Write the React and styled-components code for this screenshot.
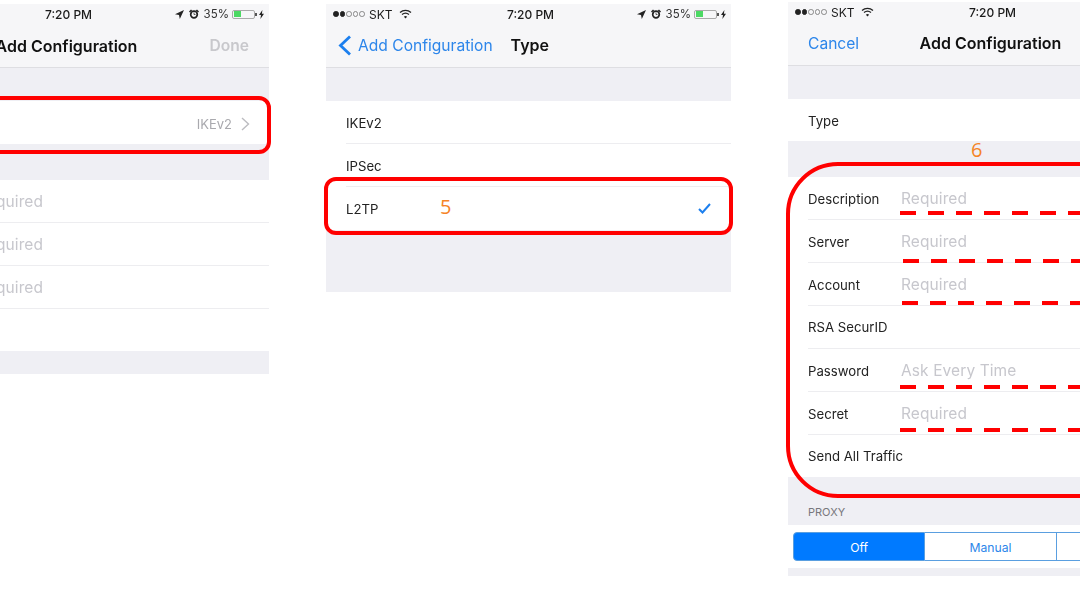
import React from "react";
import styled, { createGlobalStyle, css } from "styled-components";

const Global = createGlobalStyle`
  html, body { margin: 0; padding: 0; background: #fff; }
  body { font-family: Inter, "Liberation Sans", sans-serif; overflow: hidden; }
`;

const soft = css`
  filter: blur(0.3px);
`;

const Canvas = styled.main`
  width: 1216px;
  height: 592px;
  overflow: hidden;
  display: flex;
  align-items: flex-start;
  gap: 57px;
  margin-left: -136px;
`;
const Phone = styled.section`
  position: relative;
  flex: 0 0 405px;
  width: 405px;
  margin-top: ${(p) => p.$top}px;
  background: #efeff4;
`;
const StatusBar = styled.div`
  height: 20px;
  display: grid;
  grid-template-columns: 1fr auto 1fr;
  align-items: center;
  padding: 0 5px 0 7px;
  background: #f6f6f8;
  color: #1a1a1a;
  font-size: 11.5px;
  ${soft}
`;
const StatusLeft = styled.div`
  display: flex;
  align-items: center;
  gap: 4px;
`;
const StatusRight = styled.div`
  display: flex;
  align-items: center;
  justify-content: flex-end;
  gap: 5px;
`;
const Dots = styled.div`
  display: flex;
  gap: 1px;
`;
const Dot = styled.span`
  width: 5.6px;
  height: 5.6px;
  box-sizing: border-box;
  border-radius: 50%;
  border: 0.7px solid ${(p) => (p.$on ? "#222" : "#888")};
  background: ${(p) => (p.$on ? "#222" : "transparent")};
`;
const Carrier = styled.span`
  font-size: 12px;
  margin-right: 3px;
`;
const Time = styled.span`
  font-size: 12px;
  font-weight: 500;
  margin-left: 2px;
`;
const Pct = styled.span`
  color: #333;
  font-size: 11.5px;
  margin-right: -2px;
`;
const Battery = styled.div`
  position: relative;
  width: 23px;
  height: 9px;
  box-sizing: border-box;
  border: 0.7px solid #aaa;
  border-radius: 2px;
  padding: 0.5px;
  margin-right: -1px;
  &::after {
    content: "";
    position: absolute;
    right: -2.5px;
    top: 2px;
    width: 1.5px;
    height: 3.5px;
    background: #555;
  }
`;
const BatteryFill = styled.div`
  height: 100%;
  background: #4cd964;
`;
const Nav = styled.header`
  height: 43px;
  box-sizing: content-box;
  display: grid;
  grid-template-columns: 1fr auto 1fr;
  align-items: center;
  padding: 0 20px;
  column-gap: 18px;
  background: #f6f6f8;
  border-bottom: 1px solid #dedee2;
  font-size: 15.6px;
  ${soft}
`;
const NavTitle = styled.h1`
  margin: ${(p) => (p.$lift ? "-2px" : "0")} 0 0;
  font-size: 16px;
  font-weight: 600;
  color: #111;
  white-space: nowrap;
`;
const NavLink = styled.span`
  display: flex;
  align-items: center;
  justify-self: ${(p) => (p.$end ? "end" : "start")};
  margin-top: ${(p) => (p.$lift ? "-1px" : "0")};
  color: ${(p) => (p.$muted ? "#c8c8cc" : "#2d86ea")};
  font-weight: ${(p) => (p.$muted ? 600 : 400)};
  white-space: nowrap;
`;
const BackLink = styled(NavLink)`
  margin-left: -8px;
  gap: 6px;
`;
const Gap = styled.div`
  height: ${(p) => p.$h}px;
  box-sizing: border-box;
  background: #efeff4;
`;
const SectionHeader = styled(Gap)`
  display: flex;
  align-items: flex-end;
  padding: 0 0 6px 20px;
  color: #77777c;
  font-size: 11px;
`;
const List = styled.div`
  background: #fff;
`;
const Row = styled.div`
  position: relative;
  height: 43px;
  box-sizing: border-box;
  margin-left: 20px;
  padding: ${(p) => (p.$tight ? "0" : "2px")} 20px 0 0;
  display: flex;
  align-items: center;
  border-bottom: ${(p) => (p.$last ? "none" : "1px solid #ededf0")};
  color: #222;
  font-size: 13.2px;
`;
const ShortRow = styled(Row)`
  height: 42px;
`;
const Label = styled.span`
  flex: 0 0 93px;
  white-space: nowrap;
  ${soft}
`;
const Placeholder = styled.span`
  color: #c7c7cd;
  font-size: 15.5px;
  margin-top: -2px;
  letter-spacing: 0.1px;
  ${soft}
`;
const Value = styled.span`
  margin-left: auto;
  display: flex;
  align-items: center;
  gap: 9px;
  color: #a9a9ae;
  font-size: 13px;
  ${soft}
`;
const ChevronSlot = styled.span`
  display: flex;
  margin-right: -1px;
`;
const Dash = styled.div`
  position: absolute;
  left: ${(p) => p.$left}px;
  top: ${(p) => p.$top}px;
  width: 300px;
  height: 4px;
  background: repeating-linear-gradient(90deg, #f00 0 16px, transparent 16px 28px);
`;
const Callout = styled.div`
  position: absolute;
  box-sizing: border-box;
  left: ${(p) => p.$left}px;
  top: ${(p) => p.$top}px;
  width: ${(p) => p.$w}px;
  height: ${(p) => p.$h}px;
  border: 4px solid #f00;
  border-radius: ${(p) => p.$r}px;
  pointer-events: none;
`;
const StepNumber = styled.span`
  position: absolute;
  left: ${(p) => p.$left}px;
  top: ${(p) => p.$top}px;
  color: #f58426;
  font-family: "Open Sans", sans-serif;
  font-size: 20px;
  line-height: 24px;
`;
const SegmentRow = styled.div`
  height: 43px;
  box-sizing: border-box;
  padding: 7px 5px;
  background: #fff;
  display: flex;
`;
const Segment = styled.div`
  flex: 1;
  display: flex;
  align-items: center;
  justify-content: center;
  padding-top: 1px;
  font-size: 12.2px;
  color: ${(p) => (p.$active ? "#fff" : "#2d86ea")};
  background: ${(p) => (p.$active ? "#007aff" : "#fff")};
  border: 1px solid #5a9fe0;
  border-left-width: ${(p) => (p.$first ? 1 : 0)}px;
  border-radius: ${(p) => (p.$first ? "4px 0 0 4px" : p.$lastSeg ? "0 4px 4px 0" : "0")};
`;

const Wifi = () => (
  <svg width="13" height="10" viewBox="0 0 13 10" fill="none" stroke="#222" strokeWidth="1.3">
    <path d="M1 3.4C4.2.6 8.8.6 12 3.4" />
    <path d="M3 5.6c2.1-1.8 4.9-1.8 7 0" />
    <path d="M6.5 9.6 4.9 7.7c1-.8 2.2-.8 3.2 0Z" fill="#222" stroke="none" />
  </svg>
);
const Arrow = () => (
  <svg width="9" height="9" viewBox="0 0 9 9"><path d="M9 0 0 4.2l4 .8.8 4Z" fill="#222" /></svg>
);
const Alarm = () => (
  <svg width="10" height="10" viewBox="0 0 10 10">
    <circle cx="5" cy="5.5" r="3.3" fill="none" stroke="#222" strokeWidth="1.7" />
    <path d="M0 2.4 2 .4l1.2 1L1 3.4ZM10 2.4 8 .4 6.8 1.4 9 3.4Z" fill="#222" />
    <path d="M5 3.5V5.5H6.5" fill="none" stroke="#222" strokeWidth=".7" />
  </svg>
);
const Bolt = () => (
  <svg width="5" height="9" viewBox="0 0 5 9"><path d="M3.4 0 0 5h2L1.4 9 5 3.7H2.9Z" fill="#222" /></svg>
);
const Chevron = () => (
  <svg width="9" height="14" viewBox="0 0 9 14" fill="none" stroke="#bcbcc0" strokeWidth="1.4">
    <path d="m1 1 6.5 6L1 13" />
  </svg>
);
const BackChevron = () => (
  <svg width="14" height="21" viewBox="0 0 14 21" fill="none" stroke="#1c7fee" strokeWidth="2.8">
    <path d="M12 1.5 2.5 10.500 12 19.500" />
  </svg>
);
const Check = () => (
  <svg width="13" height="11" viewBox="0 0 13 11" fill="none" stroke="#1c7fee" strokeWidth="2">
    <path d="m1 6 3.500 3.500L12 1" />
  </svg>
);

const Status = () => (
  <StatusBar>
    <StatusLeft>
      <Dots>
        {[true, true, false, false, false].map((on, i) => <Dot key={i} $on={on} />)}
      </Dots>
      <Carrier>SKT</Carrier>
      <Wifi />
    </StatusLeft>
    <Time>7:20 PM</Time>
    <StatusRight>
      <Arrow />
      <Alarm />
      <Pct>35%</Pct>
      <Battery><BatteryFill style={{ width: "38%" }} /></Battery>
      <Bolt />
    </StatusRight>
  </StatusBar>
);

export default function App() {
  return (
    <Canvas>
      <Global />
      <Phone $top={4}>
        <Status />
        <Nav>
          <span />
          <NavTitle>Add Configuration</NavTitle>
          <NavLink $end $muted>Done</NavLink>
        </Nav>
        <Gap $h={33} />
        <List>
          <Row $last>
            <Value>IKEv2 <ChevronSlot><Chevron /></ChevronSlot></Value>
          </Row>
        </List>
        <Gap $h={36} />
        <List>
          <Row><Label /><Placeholder>Required</Placeholder></Row>
          <Row><Label /><Placeholder>Required</Placeholder></Row>
          <Row><Label /><Placeholder>Required</Placeholder></Row>
          <ShortRow $last />
        </List>
        <Gap $h={23} />
        <Callout $left={-10} $top={92} $w={417} $h={58} $r={12} />
      </Phone>

      <Phone $top={4}>
        <Status />
        <Nav>
          <BackLink $lift><BackChevron />Add Configuration</BackLink>
          <NavTitle $lift>Type</NavTitle>
          <span />
        </Nav>
        <Gap $h={33} />
        <List>
          <Row><Label>IKEv2</Label></Row>
          <Row><Label>IPSec</Label></Row>
          <Row $last $tight>
            <Label>L2TP</Label>
            <Value><Check /></Value>
          </Row>
        </List>
        <Gap $h={62} />
        <Callout $left={-2} $top={173} $w={409} $h={58} $r={12} />
        <StepNumber $left={114} $top={191}>5</StepNumber>
      </Phone>

      <Phone $top={2}>
        <Status />
        <Nav>
          <NavLink $lift>Cancel</NavLink>
          <NavTitle $lift>Add Configuration</NavTitle>
          <span />
        </Nav>
        <Gap $h={33} />
        <List>
          <ShortRow $last><Label>Type</Label></ShortRow>
        </List>
        <Gap $h={36} />
        <List>
          <Row><Label>Description</Label><Placeholder>Required</Placeholder><Dash $left={92} $top={34} /></Row>
          <Row><Label>Server</Label><Placeholder>Required</Placeholder><Dash $left={95} $top={39} /></Row>
          <Row><Label>Account</Label><Placeholder>Required</Placeholder><Dash $left={94} $top={38} /></Row>
          <Row $tight><Label>RSA SecurID</Label></Row>
          <Row><Label>Password</Label><Placeholder>Ask Every Time</Placeholder><Dash $left={92} $top={36} /></Row>
          <Row><Label>Secret</Label><Placeholder>Required</Placeholder><Dash $left={92} $top={36} /></Row>
          <ShortRow $last $tight><Label>Send All Traffic</Label></ShortRow>
        </List>
        <SectionHeader $h={48}>PROXY</SectionHeader>
        <SegmentRow>
          <Segment $active $first>Off</Segment>
          <Segment>Manual</Segment>
          <Segment $lastSeg />
        </SegmentRow>
        <Gap $h={8} />
        <Callout $left={-2} $top={160} $w={420} $h={336} $r={52} />
        <StepNumber $left={183} $top={136}>6</StepNumber>
      </Phone>
    </Canvas>
  );
}
